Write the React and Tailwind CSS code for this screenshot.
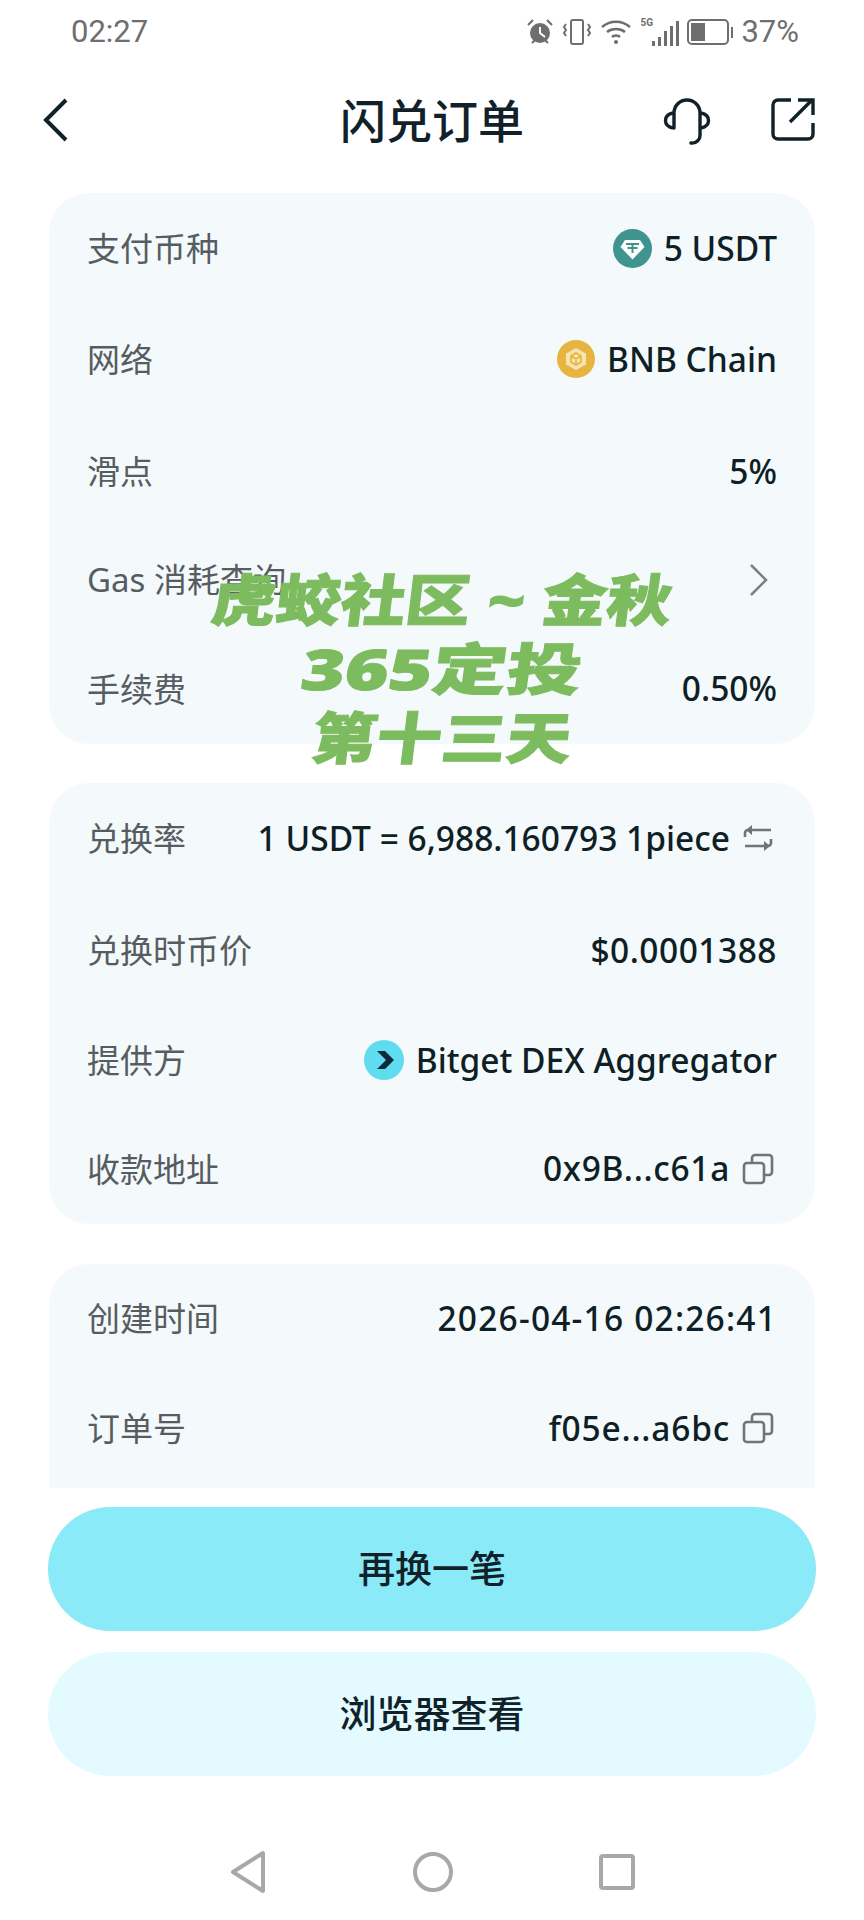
const sans = 'font-["Noto_Sans","Noto_Sans_CJK_SC",sans-serif]';

function Tether() {
  return (
    <svg width="39" height="39" viewBox="0 0 39 39" className="shrink-0">
      <circle cx="19.5" cy="19.5" r="19.5" fill="#3f9490" />
      <path d="M12 11h15l4.500 7-12 12.500L7.500 18z" fill="#fff" />
      <path d="M13 15h13M19.500 15v9M14.500 19h10" stroke="#3f9490" strokeWidth="2" fill="none" />
    </svg>
  );
}

function Bnb() {
  return (
    <svg width="38" height="38" viewBox="0 0 38 38" className="shrink-0">
      <circle cx="19" cy="19" r="19" fill="#e8b440" />
      <path d="M19 8l10 5.500v11L19 30 9 24.500v-11z" fill="#f7e3ae" />
      <path d="M19 13l5 3v6l-5 3-5-3v-6zM19 19v6M14 16l5 3 5-3" stroke="#e8b440" strokeWidth="1.6" fill="none" />
    </svg>
  );
}

function Bitget() {
  return (
    <svg width="40" height="40" viewBox="0 0 40 40" className="shrink-0">
      <circle cx="20" cy="20" r="20" fill="#5fdcef" />
      <path d="M13 11h8l9 9-9 9h-8l9-9z" fill="#0d2a3a" />
    </svg>
  );
}

function Copy() {
  return (
    <svg width="32" height="32" viewBox="0 0 32 32" fill="none" stroke="#6f7578" strokeWidth="2.6" className="mr-[3px] shrink-0">
      <rect x="2" y="10" width="20" height="20" rx="3" />
      <path d="M10 10V5a3 3 0 0 1 3-3h14a3 3 0 0 1 3 3v14a3 3 0 0 1-3 3h-5" />
    </svg>
  );
}

function Swap() {
  return (
    <svg width="32" height="28" viewBox="0 0 32 28" fill="none" stroke="#6f7578" strokeWidth="2.6" className="mr-[3px] shrink-0">
      <path d="M3 13V9a3 3 0 0 1 3-3h23M29 15v4a3 3 0 0 1-3 3H3" />
      <path d="M10 1L4 6l6 5zM22 17l6 5-6 5z" fill="#6f7578" stroke="none" />
    </svg>
  );
}

function Row({ label, h, children }) {
  return (
    <div className={`flex items-center justify-between ${h}`}>
      <span className="pt-[2px] text-[33px] text-[#565d61]">{label}</span>
      <div className="flex items-center gap-3 text-[33.5px] font-medium text-[#0f1f26]">{children}</div>
    </div>
  );
}

function Card({ className, children }) {
  return <div className={`rounded-[40px] bg-[#f4f9fb] px-[38px] ${className}`}>{children}</div>;
}

function StatusBar() {
  return (
    <div className='flex h-[64px] items-center justify-between pl-[71px] pr-[65px] font-["Roboto",sans-serif] text-[31px] text-[#6e6e6e]'>
      <span>02:27</span>
      <div className="flex items-center gap-[8px]">
        <svg width="28" height="28" viewBox="0 0 28 28">
          <circle cx="14" cy="15" r="10" fill="#6e6e6e" />
          <path d="M14 9v6l5 4" stroke="#fff" strokeWidth="2" fill="none" />
          <path d="M2 7l5-5M26 7l-5-5M6 25l3-3M22 25l-3-3" stroke="#6e6e6e" strokeWidth="2" />
        </svg>
        <svg width="30" height="28" viewBox="0 0 30 28" fill="none" stroke="#6e6e6e" strokeWidth="2">
          <rect x="9" y="2" width="12" height="24" rx="2" />
          <path d="M4 6l-2 3 2 3-2 3 2 3M26 6l2 3-2 3 2 3-2 3" />
        </svg>
        <svg width="32" height="28" viewBox="0 0 32 28" fill="none" stroke="#6e6e6e" strokeWidth="2.6">
          <path d="M2 9c8-7 20-7 28 0M7 14c5-4 13-4 18 0M12 19c2-2 6-2 8 0" />
          <circle cx="16" cy="24" r="2" fill="#6e6e6e" stroke="none" />
        </svg>
        <div className="relative flex h-[28px] items-end gap-[3px] pl-[12px]">
          <span className="absolute left-0 top-0 text-[10px] font-bold leading-[10px]">5G</span>
          <span className="h-[5px] w-[3px] bg-[#6e6e6e]" />
          <span className="h-[9px] w-[3px] bg-[#6e6e6e]" />
          <span className="h-[15px] w-[3px] bg-[#6e6e6e]" />
          <span className="h-[20px] w-[3px] bg-[#6e6e6e]" />
          <span className="h-[25px] w-[3px] bg-[#6e6e6e]" />
        </div>
        <div className="flex items-center gap-[2px]">
          <div className="flex h-[26px] w-[42px] rounded-[5px] border-2 border-[#6e6e6e] p-[2px]">
            <div className="h-full w-[14px] bg-[#6e6e6e]" />
          </div>
          <div className="h-[11px] w-[2px] bg-[#6e6e6e]" />
        </div>
        <span>37%</span>
      </div>
    </div>
  );
}

function Header() {
  return (
    <div className="relative flex h-[112px] items-center justify-center">
      <svg width="28" height="46" viewBox="0 0 28 46" fill="none" stroke="#10212a" strokeWidth="4" className="absolute left-[41px] top-[33px]">
        <path d="M25 3L5 23l20 20" />
      </svg>
      <h1 className="text-[46px] font-medium text-[#10212a]">闪兑订单</h1>
      <svg width="48" height="50" viewBox="0 0 48 50" fill="none" stroke="#10212a" strokeWidth="3.4" className="absolute left-[663px] top-[31px]">
        <path d="M11 33V18a13 13 0 0 1 26 0v21a8 8 0 0 1-9 9" strokeLinecap="round" />
        <path d="M10 18c-10 2-10 13 0 15M38 18c10 2 10 13 0 15" />
      </svg>
      <svg width="44" height="44" viewBox="0 0 44 44" fill="none" stroke="#10212a" strokeWidth="3.4" className="absolute left-[771px] top-[33px]">
        <path d="M20 3H7a5 5 0 0 0-5 5v29a5 5 0 0 0 5 5h30a5 5 0 0 0 5-5V26" />
        <path d="M19 25L41 3M27 3h15v15" />
      </svg>
    </div>
  );
}

export default function App() {
  return (
    <div className={`relative flex h-[1920px] w-[864px] flex-col overflow-hidden bg-white ${sans}`}>
      <StatusBar />
      <Header />
      <div className="mx-[49px] mt-[17px] flex h-[1295px] flex-col gap-[39px] overflow-hidden">
        <Card className="h-[551px] shrink-0">
          <Row label="支付币种" h="h-[110px]"><Tether /><span>5 USDT</span></Row>
          <Row label="网络" h="h-[112px]"><Bnb /><span>BNB Chain</span></Row>
          <Row label="滑点" h="h-[112px]"><span>5%</span></Row>
          <div className="flex h-[106px] items-center justify-between text-[#565d61]">
            <span className="text-[33px]">Gas 消耗查询</span>
            <svg width="20" height="34" viewBox="0 0 20 34" fill="none" stroke="#7b8185" strokeWidth="2.6" className="mr-[8px]">
              <path d="M2 2l15 15L2 32" />
            </svg>
          </div>
          <Row label="手续费" h="h-[111px]"><span>0.50%</span></Row>
        </Card>
        <Card className="h-[441px] shrink-0">
          <Row label="兑换率" h="h-[110px]"><span>1 USDT = 6,988.160793 1piece</span><Swap /></Row>
          <Row label="兑换时币价" h="h-[114px]"><span className="tracking-[0.5px]">$0.0001388</span></Row>
          <Row label="提供方" h="h-[106px]"><Bitget /><span>Bitget DEX Aggregator</span></Row>
          <Row label="收款地址" h="h-[111px]"><span className="tracking-[0.7px]">0x9B...c61a</span><Copy /></Row>
        </Card>
        <Card className="mt-[1px] h-[300px] shrink-0">
          <Row label="创建时间" h="h-[108px]"><span className="tracking-[1.2px]">2026-04-16 02:26:41</span></Row>
          <Row label="订单号" h="h-[112px]"><span className="tracking-[0.8px]">f05e...a6bc</span><Copy /></Row>
        </Card>
      </div>
      <div className="mx-[48px] mt-[19px] flex flex-col gap-[21px]">
        <button className="h-[124px] rounded-full bg-[#8aeaf7] text-[37px] font-medium text-[#10212a]">再换一笔</button>
        <button className="h-[124px] rounded-full bg-[#e3fbff] text-[37px] font-medium text-[#10212a]">浏览器查看</button>
      </div>
      <div className="mt-[74px] flex items-center justify-center gap-[146px]">
        <svg width="38" height="44" viewBox="0 0 38 44" fill="none" stroke="#a8a8a8" strokeWidth="4" strokeLinejoin="round">
          <path d="M34 3v38L4 22z" />
        </svg>
        <svg width="40" height="40" viewBox="0 0 40 40" fill="none" stroke="#a8a8a8" strokeWidth="4">
          <circle cx="20" cy="20" r="18" />
        </svg>
        <svg width="36" height="36" viewBox="0 0 36 36" fill="none" stroke="#a8a8a8" strokeWidth="4">
          <rect x="2" y="2" width="32" height="32" rx="2" />
        </svg>
      </div>
      <div className="absolute left-[10px] top-[565px] w-full text-center text-[56px] font-black leading-[69px] text-[#7dbb5f] [-webkit-text-stroke:1px_#7dbb5f]">
        <div className="-skew-x-6 scale-x-[1.157]">虎蛟社区 ~ 金秋</div>
        <div className="-skew-x-6 scale-x-[1.33]">365定投</div>
        <div className="-skew-x-6 scale-x-[1.157]">第十三天</div>
      </div>
    </div>
  );
}
